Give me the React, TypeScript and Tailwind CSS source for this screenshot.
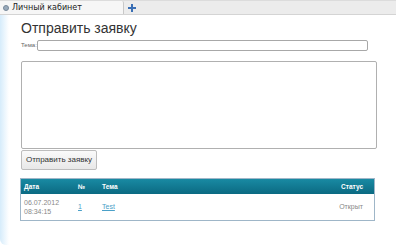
import React from "react";

export default function App() {
  const f = { fontFamily: '"Liberation Sans", Arial, sans-serif' };
  const d = { fontFamily: '"DejaVu Sans", sans-serif' };
  return (
    <div className="w-[396px] h-[251px] bg-white overflow-hidden flex flex-col" style={f}>
      <div className="h-[15px] bg-[#ececec] border-t border-[#dcdcdc] border-b border-b-[#d4d4d4] flex items-end">
        <div className="h-[13px] w-[124px] bg-[#f6f6f6] border-r border-[#c8c8c8] rounded-tr-[2px] flex items-center gap-[3px] pl-[3px]">
          <div className="w-[6px] h-[6px] rounded-full bg-[#9ab] border border-[#789]" />
          <span className="text-[8px] leading-none text-[#222]" style={d}>Личный кабинет</span>
        </div>
        <div className="h-[13px] w-[16px] flex items-center justify-center">
          <svg width="8" height="8" viewBox="0 0 8 8">
            <path d="M3 0h2v3h3v2H5v3H3V5H0V3h3z" fill="#3a6fb5" />
          </svg>
        </div>
      </div>
      <div className="flex-1 flex">
        <div className="w-[9px] h-[230px] rounded-bl-[6px] bg-gradient-to-r from-[#d6ecfb] to-white" />
        <div className="flex-1 flex flex-col pl-[12px]">
          <div className="text-[14px] leading-[20px] text-[#333] mt-[3px] whitespace-nowrap">Отправить заявку</div>
          <div className="flex items-center mt-[1px] h-[12px]">
            <span className="text-[6px] text-[#666] shrink-0 whitespace-nowrap">Тема:</span>
            <div className="w-[331px] shrink-0 h-[11px] border border-[#a8a8a8] rounded-[2px] bg-white" />
          </div>
          <div className="w-[356px] h-[88px] mt-[10px] border border-[#b0b0b0] rounded-[2px] bg-white" />
          <div className="mt-[1px] w-[76px] h-[20px] border border-[#bdbdbd] rounded-[2px] bg-gradient-to-b from-[#fafafa] to-[#e8e8e8] flex items-center justify-center">
            <span className="text-[8px] text-[#333] whitespace-nowrap">Отправить заявку</span>
          </div>
          <div className="mt-[8px] -ml-[1px] w-[355px] border border-[#9fb6c8] bg-white">
            <div className="h-[15px] bg-gradient-to-b from-[#198aa3] to-[#0b6a82] flex items-center text-[6.5px] text-white font-bold">
              <span className="w-[57px] pl-[3px]">Дата</span>
              <span className="w-[24px]">№</span>
              <span className="flex-1">Тема</span>
              <span className="pr-[11px]">Статус</span>
            </div>
            <div className="h-[26px] flex items-center text-[7px] text-[#888]">
              <div className="w-[57px] pl-[3px] leading-[9px]">
                <div>06.07.2012</div>
                <div>08:34:15</div>
              </div>
              <span className="w-[24px] text-[#4aa0c8] underline">1</span>
              <span className="flex-1 text-[#4aa0c8] underline">Test</span>
              <span className="pr-[11px] text-[#888]">Открыт</span>
            </div>
          </div>
        </div>
      </div>
    </div>
  );
}
